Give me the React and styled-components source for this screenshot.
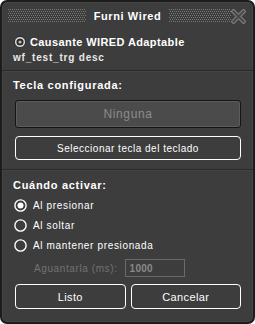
import React, { useState } from 'react';
import styled, { createGlobalStyle } from 'styled-components';

const GlobalStyle = createGlobalStyle`
  html, body {
    margin: 0;
    padding: 0;
    background: #ffffff;
  }
  * {
    box-sizing: border-box;
  }
`;

const Window = styled.div`
  width: 255px;
  height: 324px;
  background-color: #3d3d3d;
  border: 2px solid #1c1c1c;
  border-radius: 7px;
  box-shadow: inset 0 0 0 1px #454545;
  display: flex;
  flex-direction: column;
  font-family: 'Liberation Sans', Arial, sans-serif;
  color: #ffffff;
  overflow: hidden;
`;

const Header = styled.div`
  height: 27px;
  display: flex;
  align-items: center;
  padding: 1px 7px 0 6px;
  flex-shrink: 0;
`;

const DotsBox = styled.div`
  flex: 0 0 auto;
  display: flex;
  align-items: center;
`;

const Title = styled.div`
  width: 84px;
  text-align: center;
  font-weight: 700;
  font-size: 11px;
  letter-spacing: 0.6px;
`;

const Close = styled.div`
  width: 15px;
  height: 15px;
  display: flex;
`;

const Section = styled.div`
  padding: ${(p) => p.$pad || '0'};
  padding-left: 11px;
  padding-right: 12px;
  display: flex;
  flex-direction: column;
`;

const Separator = styled.div`
  height: 2px;
  border-top: 1px solid #2a2a2a;
  border-bottom: 1px solid #444444;
  flex-shrink: 0;
`;

const TriggerRow = styled.div`
  display: flex;
  align-items: center;
  height: 14px;
  gap: 4px;
  padding-left: 1px;
  font-weight: 700;
  font-size: 11px;
  letter-spacing: 0.4px;
`;

const Desc = styled.div`
  height: 14px;
  line-height: 14px;
  margin-top: 2px;
  font-size: 10px;
  font-weight: 700;
  letter-spacing: 0.8px;
  color: #e8e8e8;
`;

const Label = styled.div`
  height: 14px;
  line-height: 14px;
  font-size: 11px;
  font-weight: 700;
  letter-spacing: 0.7px;
`;

const KeyField = styled.div`
  height: 28px;
  margin: 8px 0 0 2px;
  background: #4b4b4b;
  border: 1px solid #141414;
  border-radius: 3px;
  box-shadow: inset 0 0 0 1px #5c5c5c;
  display: flex;
  align-items: center;
  justify-content: center;
  color: #8c8c8c;
  font-size: 12px;
  letter-spacing: 0.6px;
`;

const Button = styled.button`
  height: ${(p) => p.$h || 24}px;
  flex: 1;
  background: transparent;
  border: 1px solid #ffffff;
  border-radius: 4px;
  color: #ffffff;
  font-family: 'Liberation Sans', Arial, sans-serif;
  font-size: ${(p) => p.$size || 10}px;
  letter-spacing: ${(p) => p.$ls || 0.5}px;
  padding: 0;
  cursor: pointer;
`;

const ButtonRow = styled.div`
  display: flex;
  gap: 5px;
  margin-top: ${(p) => p.$mt || 0}px;
  margin-left: 2px;
`;

const RadioRow = styled.label`
  height: 20px;
  display: flex;
  align-items: center;
  gap: 6px;
  padding-left: 1px;
  font-size: 10px;
  letter-spacing: 0.65px;
  cursor: pointer;
`;

const DelayRow = styled.div`
  display: flex;
  align-items: center;
  height: 18px;
  margin-top: 4px;
  padding-left: 21px;
  gap: 7px;
  font-size: 10px;
  letter-spacing: 0.6px;
  color: #727272;
`;

const DelayInput = styled.div`
  width: 60px;
  height: 18px;
  border: 1px solid #6a6a6a;
  padding-left: 4px;
  display: flex;
  align-items: center;
  color: #8a8a8a;
  font-size: 10px;
  font-weight: 700;
  letter-spacing: 0.3px;
`;

// dotted strip either side of the title
const Dots = ({ width }) => {
  const dots = [];
  for (let y = 0; y < 14; y += 2) {
    for (let x = 0; x < width; x += 2) {
      dots.push(<rect key={`${x}-${y}`} x={x + ((y / 2) % 2)} y={y} width="1" height="1" />);
    }
  }
  return (
    <DotsBox>
      <svg width={width} height="14" viewBox={`0 0 ${width} 14`} shapeRendering="crispEdges">
        <g fill="#777777">{dots}</g>
      </svg>
    </DotsBox>
  );
};

const Radio = ({ checked }) => (
  <svg width="13" height="13" viewBox="0 0 13 13">
    <circle cx="6.5" cy="6.5" r="5.6" fill="none" stroke="#ffffff" strokeWidth="1.4" />
    {checked && <circle cx="6.5" cy="6.5" r="3" fill="#ffffff" />}
  </svg>
);

const TriggerIcon = () => (
  <svg width="12" height="12" viewBox="0 0 12 12">
    <circle cx="6" cy="6" r="5.5" fill="#e6e6e6" stroke="#111" strokeWidth="0.8" />
    <circle cx="6" cy="6" r="3.6" fill="#2a2a2a" />
    <circle cx="6" cy="6" r="1.6" fill="#bdbdbd" />
  </svg>
);

const CloseIcon = () => (
  <svg width="15" height="15" viewBox="0 0 15 15">
    <path d="M2.5 2.5 L12.5 12.5 M12.5 2.5 L2.5 12.5" stroke="#7c7c7c" strokeWidth="4.4" strokeLinecap="square" />
    <path d="M2.5 2.5 L12.5 12.5 M12.5 2.5 L2.5 12.5" stroke="#484848" strokeWidth="2" strokeLinecap="square" />
  </svg>
);

const options = ['Al presionar', 'Al soltar', 'Al mantener presionada'];

const App = () => {
  const [mode, setMode] = useState(0);

  return (
    <>
      <GlobalStyle />
      <Window>
        <Header>
          <Dots width={78} />
          <Title>Furni Wired</Title>
          <Dots width={62} />
          <Close>
            <CloseIcon />
          </Close>
        </Header>

        <Section $pad="6px 0 5px">
          <TriggerRow>
            <TriggerIcon />
            Causante WIRED Adaptable
          </TriggerRow>
          <Desc>wf_test_trg desc</Desc>
        </Section>
        <Separator />

        <Section $pad="6px 0 9px">
          <Label>Tecla configurada:</Label>
          <KeyField>Ninguna</KeyField>
          <ButtonRow $mt={8}>
            <Button>Seleccionar tecla del teclado</Button>
          </ButtonRow>
        </Section>
        <Separator />

        <Section $pad="7px 0 0">
          <Label>Cuándo activar:</Label>
          <div style={{ height: 3 }} />
          {options.map((o, i) => (
            <RadioRow key={o} onClick={() => setMode(i)}>
              <Radio checked={mode === i} />
              {o}
            </RadioRow>
          ))}
          <DelayRow>
            Aguantarla (ms):
            <DelayInput>1000</DelayInput>
          </DelayRow>
          <ButtonRow $mt={7}>
            <Button $h={25} $size={11} $ls={0.4}>Listo</Button>
            <Button $h={25} $size={11} $ls={0.4}>Cancelar</Button>
          </ButtonRow>
        </Section>
      </Window>
    </>
  );
};

export default App;
